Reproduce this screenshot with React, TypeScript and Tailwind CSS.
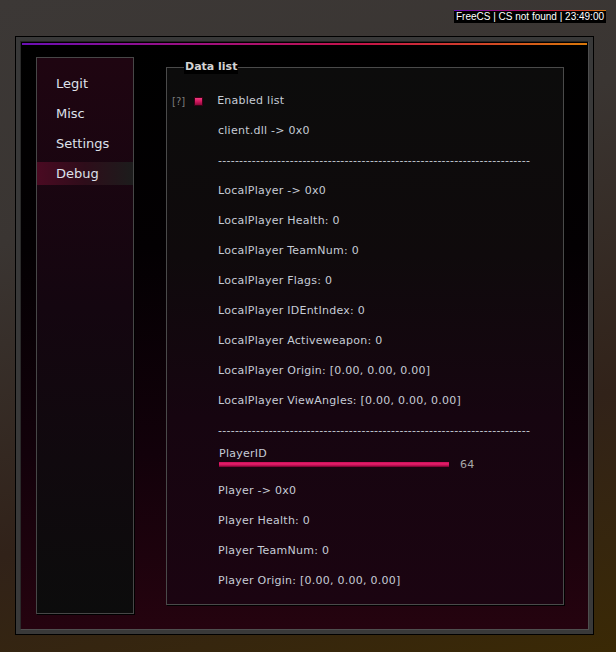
import React from 'react';

const accent =
  'bg-[linear-gradient(to_right,#6b0fb5_0%,#a4107a_35%,#c41448_60%,#d0402a_80%,#d9780a_100%)]';

const localRows = [
  'LocalPlayer -> 0x0',
  'LocalPlayer Health: 0',
  'LocalPlayer TeamNum: 0',
  'LocalPlayer Flags: 0',
  'LocalPlayer IDEntIndex: 0',
  'LocalPlayer Activeweapon: 0',
  'LocalPlayer Origin: [0.00, 0.00, 0.00]',
  'LocalPlayer ViewAngles: [0.00, 0.00, 0.00]',
];

const playerRows = [
  'Player -> 0x0',
  'Player Health: 0',
  'Player TeamNum: 0',
  'Player Origin: [0.00, 0.00, 0.00]',
];

const tabs = ['Legit', 'Misc', 'Settings', 'Debug'];

const dashes = '-'.repeat(74);

function Row({ children }: { children: React.ReactNode }) {
  return <div className="flex h-[30px] items-center pl-[51px]">{children}</div>;
}

export default function App() {
  return (
    <div className="flex min-h-screen w-full flex-col bg-[linear-gradient(165deg,#3c3836_0%,#3a3532_30%,#312219_68%,#3a2905_100%)] font-['DejaVu_Sans',sans-serif] text-[11px] tracking-[0.25px] text-[#c6ccd6]">
      {/* watermark */}
      <div className="flex justify-end pr-[10px] pt-[10px]">
        <div className="flex flex-col">
          <div className={`h-[1px] ${accent}`} />
          <div className="flex h-[12px] items-center bg-black px-[2px] font-['Liberation_Sans',sans-serif] text-[10px] leading-none tracking-normal text-white">
            FreeCS | CS not found | 23:49:00
          </div>
        </div>
      </div>

      {/* window */}
      <div className="ml-[15px] mt-[13px] h-[599px] w-[579px] border border-black bg-[#393939] p-[4px]">
        <div className="flex h-full flex-col border border-[#4e4e4e] border-t-[#222] border-l-[#2a2a2a] bg-[linear-gradient(to_bottom,#000_0%,#030002_35%,#12010a_70%,#25030f_100%)]">
          <div className={`mx-[1px] mt-[1px] h-[2px] ${accent}`} />

          <div className="flex gap-[32px] pl-[15px]">
            {/* sidebar */}
            <div className="mt-[12px] flex h-[557px] w-[98px] flex-col gap-[7px] border border-[#474747] bg-[linear-gradient(to_bottom,#1f0511_0%,#140610_45%,#0c0c0c_100%)] pt-[14px] shadow-[1px_1px_0_#000]">
              {tabs.map((t) => (
                <div
                  key={t}
                  className={`flex h-[23px] items-center pl-[19px] text-[13px] tracking-normal text-[#dde1ea] ${
                    t === 'Debug'
                      ? 'bg-[linear-gradient(to_right,#4a0a22_0%,#2e0d1a_50%,#1c1c1c_100%)]'
                      : ''
                  }`}
                >
                  {t}
                </div>
              ))}
            </div>

            {/* data list */}
            <div className="relative mt-[22px] flex h-[538px] w-[398px] flex-col border border-[#4a4a4a] bg-[linear-gradient(to_bottom,#0c0c0c_0%,#0f0a0c_35%,#160510_65%,#1b0411_100%)] pt-[18px] shadow-[1px_1px_0_#000]">
              <div className="absolute left-[17px] top-[-8px] bg-black px-[1px] text-[11px] font-bold leading-[14px] tracking-normal text-[#d4d4d4]">
                Data list
              </div>

              <div className="flex h-[30px] items-center">
                <span className="ml-[5px] text-[10px] tracking-normal text-[#7c7c7c]">[?]</span>
                <span className="ml-[9px] h-[9px] w-[9px] border border-[#3a0016] bg-[linear-gradient(to_bottom,#f23a80_0%,#d0185e_50%,#8a0a3a_100%)]" />
                <span className="ml-[14px]">Enabled list</span>
              </div>
              <Row>client.dll -&gt; 0x0</Row>
              <Row>{dashes}</Row>
              {localRows.map((r) => (
                <Row key={r}>{r}</Row>
              ))}
              <Row>{dashes}</Row>

              <div className="flex h-[30px] flex-col pl-[52px] pt-[2px]">
                <div className="leading-[12px]">PlayerID</div>
                <div className="mt-[2px] flex h-[5px] items-center">
                  <div className="h-[5px] w-[230px] bg-[linear-gradient(to_bottom,#c80e58_0%,#e8206c_40%,#b00c4c_75%,#6a0028_100%)]" />
                  <span className="ml-[11px] leading-none text-[#a8a8a8]">64</span>
                </div>
              </div>

              {playerRows.map((r) => (
                <Row key={r}>{r}</Row>
              ))}
            </div>
          </div>
        </div>
      </div>
    </div>
  );
}
